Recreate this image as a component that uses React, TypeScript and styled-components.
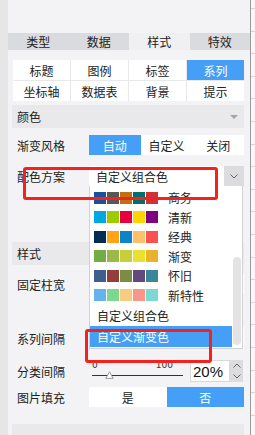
import styled, { createGlobalStyle } from "styled-components";

const GlobalStyle = createGlobalStyle`
  html, body {
    margin: 0;
    padding: 0;
  }
  body {
    font-family: "Noto Sans CJK SC", "Noto Sans", sans-serif;
    font-size: 12px;
    color: #222;
  }
`;

const BLUE = "#469ff6";

const Root = styled.div`
  position: relative;
  display: flex;
  width: 255px;
  height: 435px;
  overflow: hidden;
`;

const LeftStrip = styled.div`
  width: 8px;
  background: #e6e6e7;
`;

const Panel = styled.div`
  width: 242px;
  padding-top: 33px;
  background: #f3f3f5;
  display: flex;
  flex-direction: column;
`;

const Divider = styled.div`
  width: 1px;
  background: #9a9a9a;
`;

const SheetEdge = styled.div`
  flex: 1;
  background: repeating-linear-gradient(
    to bottom,
    #f8f8f8 0px,
    #f8f8f8 8px,
    #d4d4d4 8px,
    #d4d4d4 9px,
    #f8f8f8 9px,
    #f8f8f8 22.6px
  );
`;

const TabBar = styled.div`
  display: flex;
  height: 25px;
`;

const Tab = styled.div<{ $active?: boolean }>`
  flex: 1;
  display: flex;
  align-items: center;
  justify-content: center;
  font-size: 12px;
  background: ${(p) => (p.$active ? "#f0f0f2" : "#dadbde")};
`;

const Content = styled.div`
  padding: 0 6px 0 4px;
  display: flex;
  flex-direction: column;
`;

const SubTabs = styled.div`
  margin: 10px 0 0 1px;
  display: grid;
  grid-template-columns: repeat(4, 1fr);
  grid-auto-rows: 20px;
  gap: 1px;
  background: #e8e8ea;
`;

const SubTab = styled.div<{ $active?: boolean }>`
  display: flex;
  align-items: center;
  justify-content: center;
  background: ${(p) => (p.$active ? BLUE : "#fff")};
  color: ${(p) => (p.$active ? "#fff" : "#222")};
`;

const SectionHeader = styled.div<{ $mt: number }>`
  margin-top: ${(p) => p.$mt}px;
  height: 23px;
  flex-shrink: 0;
  padding: 0 6px 0 5px;
  display: flex;
  align-items: center;
  justify-content: space-between;
  background: #e9e9eb;
`;

const Caret = styled.div`
  width: 0;
  height: 0;
  border-left: 4px solid transparent;
  border-right: 4px solid transparent;
  border-top: 4px solid #a5a5a8;
`;

const Row = styled.div<{ $mt: number; $h?: number }>`
  position: relative;
  margin-top: ${(p) => p.$mt}px;
  height: ${(p) => p.$h ?? 20}px;
  display: flex;
  align-items: center;
`;

const Label = styled.div`
  width: 72px;
  padding-left: 5px;
  flex-shrink: 0;
`;

const Segmented = styled.div`
  flex: 1;
  height: 100%;
  display: flex;
  background: #fff;
`;

const Segment = styled.div<{ $active?: boolean }>`
  flex: 1;
  display: flex;
  align-items: center;
  justify-content: center;
  background: ${(p) => (p.$active ? BLUE : "#fff")};
  color: ${(p) => (p.$active ? "#fff" : "#222")};
`;

const SelectWrap = styled.div`
  position: relative;
  flex: 1;
  height: 100%;
  display: flex;
  background: #fff;
`;

const SelectValue = styled.div`
  flex: 1;
  display: flex;
  align-items: center;
  padding-left: 7px;
  font-size: 12px;
`;

const SelectButton = styled.div`
  width: 20px;
  display: flex;
  align-items: center;
  justify-content: center;
  background: #dcdcdf;
`;

const Dropdown = styled.div`
  position: absolute;
  top: 100%;
  left: 0;
  width: 154px;
  height: 163px;
  box-sizing: border-box;
  background: #fff;
  border: 1px solid #d2d2d2;
  border-top: none;
  display: flex;
  z-index: 2;
`;

const OptionList = styled.div`
  flex: 1;
  padding-top: 2px;
  overflow: hidden;
`;

const PaletteOption = styled.div`
  height: 19.5px;
  display: flex;
  align-items: center;
  padding-left: 4px;
`;

const Swatches = styled.div`
  display: flex;
  gap: 1px;
  margin-right: 10px;
`;

const Swatch = styled.div<{ $color: string }>`
  width: 12px;
  height: 12px;
  background: ${(p) => p.$color};
`;

const TextOption = styled.div<{ $active?: boolean }>`
  height: 21px;
  display: flex;
  align-items: center;
  padding-left: 7px;
  background: ${(p) => (p.$active ? BLUE : "transparent")};
  color: ${(p) => (p.$active ? "#fff" : "#222")};
`;

const ScrollTrack = styled.div`
  width: 10px;
  padding-top: 71px;
  display: flex;
  justify-content: center;
`;

const ScrollThumb = styled.div`
  width: 8px;
  height: 88px;
  border-radius: 4px;
  background: #e3e3e3;
`;

const SliderBox = styled.div`
  width: 98px;
  height: 100%;
  position: relative;
  display: flex;
  flex-direction: column;
`;

const SliderScale = styled.div`
  display: flex;
  justify-content: space-between;
  padding: 0 14px 0 3px;
  font-family: "DejaVu Sans", sans-serif;
  font-size: 9px;
  line-height: 11px;
  color: #333;
`;

const SliderLine = styled.div`
  position: relative;
  margin: 4px 0 0 3px;
  width: 91px;
  height: 1px;
  background: #333;
`;

const SliderThumb = styled.svg`
  position: absolute;
  left: 13px;
  top: -4px;
`;

const NumberInput = styled.div`
  margin-left: 3px;
  width: 40px;
  height: 100%;
  box-sizing: border-box;
  border: 1px solid #d8d8d8;
  background: #fff;
  display: flex;
  align-items: center;
  padding-left: 2px;
  font-family: "Liberation Sans", sans-serif;
  font-size: 15px;
  color: #111;
`;

const Spinner = styled.div`
  width: 13px;
  height: 100%;
  background: #dcdcdf;
  display: flex;
  flex-direction: column;
  align-items: center;
  justify-content: space-around;
`;

const Covered = styled.div`
  flex: 1;
  height: 100%;
  background: #fff;
`;

const RedMark = styled.div<{ $x: number; $y: number; $w: number; $h: number }>`
  position: absolute;
  left: ${(p) => p.$x}px;
  top: ${(p) => p.$y}px;
  width: ${(p) => p.$w}px;
  height: ${(p) => p.$h}px;
  box-sizing: border-box;
  border: 3px solid #f5211d;
  border-radius: 3px;
  z-index: 5;
`;

const palettes: { name: string; colors: string[] }[] = [
  { name: "商务", colors: ["#1d5098", "#575757", "#c0700f", "#006e6b", "#cf3235"] },
  { name: "清新", colors: ["#00a8e1", "#9ccc00", "#e6003e", "#ffd400", "#810081"] },
  { name: "经典", colors: ["#012c55", "#ffa416", "#0d84c8", "#ffc06b", "#fa5152"] },
  { name: "渐变", colors: ["#74ad45", "#9ab948", "#c8cd3a", "#ebe02b", "#eab22c"] },
  { name: "怀旧", colors: ["#3d5f8f", "#943d3d", "#7a8d43", "#624a7c", "#3c8699"] },
  { name: "新特性", colors: ["#66b1f0", "#7ad98e", "#f8cb81", "#f99589", "#7ed7d1"] },
];

const Chevron = ({ up }: { up?: boolean }) => (
  <svg width="8" height="5" viewBox="0 0 8 5">
    <path
      d={up ? "M0.5 4.5 L4 1 L7.5 4.5" : "M0.5 0.5 L4 4 L7.5 0.5"}
      fill="none"
      stroke="#666"
      strokeWidth="1"
    />
  </svg>
);

export default function App() {
  return (
    <Root>
      <GlobalStyle />
      <LeftStrip />
      <Panel>
        <TabBar>
          <Tab>类型</Tab>
          <Tab>数据</Tab>
          <Tab $active>样式</Tab>
          <Tab>特效</Tab>
        </TabBar>
        <Content>
          <SubTabs>
            <SubTab>标题</SubTab>
            <SubTab>图例</SubTab>
            <SubTab>标签</SubTab>
            <SubTab $active>系列</SubTab>
            <SubTab>坐标轴</SubTab>
            <SubTab>数据表</SubTab>
            <SubTab>背景</SubTab>
            <SubTab>提示</SubTab>
          </SubTabs>

          <SectionHeader $mt={4}>
            <span>颜色</span>
            <Caret />
          </SectionHeader>

          <Row $mt={7}>
            <Label>渐变风格</Label>
            <Segmented>
              <Segment $active>自动</Segment>
              <Segment>自定义</Segment>
              <Segment>关闭</Segment>
            </Segmented>
          </Row>

          <Row $mt={11}>
            <Label>配色方案</Label>
            <SelectWrap>
              <SelectValue>自定义组合色</SelectValue>
              <SelectButton>
                <Chevron />
              </SelectButton>
              <Dropdown>
                <OptionList>
                  {palettes.map((p) => (
                    <PaletteOption key={p.name}>
                      <Swatches>
                        {p.colors.map((c) => (
                          <Swatch key={c} $color={c} />
                        ))}
                      </Swatches>
                      {p.name}
                    </PaletteOption>
                  ))}
                  <TextOption>自定义组合色</TextOption>
                  <TextOption $active>自定义渐变色</TextOption>
                </OptionList>
                <ScrollTrack>
                  <ScrollThumb />
                </ScrollTrack>
              </Dropdown>
            </SelectWrap>
          </Row>

          <SectionHeader $mt={56}>
            <span>样式</span>
            <Caret />
          </SectionHeader>

          <Row $mt={9}>
            <Label>固定柱宽</Label>
            <Covered />
          </Row>

          <Row $mt={33} $h={22}>
            <Label>系列间隔</Label>
            <Covered />
          </Row>

          <Row $mt={11} $h={22}>
            <Label>分类间隔</Label>
            <SliderBox>
              <SliderScale>
                <span>0</span>
                <span>100</span>
              </SliderScale>
              <SliderLine>
                <SliderThumb width="9" height="8" viewBox="0 0 9 8">
                  <path d="M4.5 0.8 L8.2 7.4 L0.8 7.4 Z" fill="#fff" stroke="#999" strokeWidth="1" />
                </SliderThumb>
              </SliderLine>
            </SliderBox>
            <NumberInput>20%</NumberInput>
            <Spinner>
              <Chevron up />
              <Chevron />
            </Spinner>
          </Row>

          <Row $mt={5}>
            <Label>图片填充</Label>
            <Segmented>
              <Segment>是</Segment>
              <Segment $active>否</Segment>
            </Segmented>
          </Row>

          <SectionHeader $mt={17} />
        </Content>
      </Panel>
      <Divider />
      <SheetEdge />

      <RedMark $x={23} $y={167} $w={195} $h={33} />
      <RedMark $x={85} $y={329} $w={127} $h={34} />
    </Root>
  );
}
